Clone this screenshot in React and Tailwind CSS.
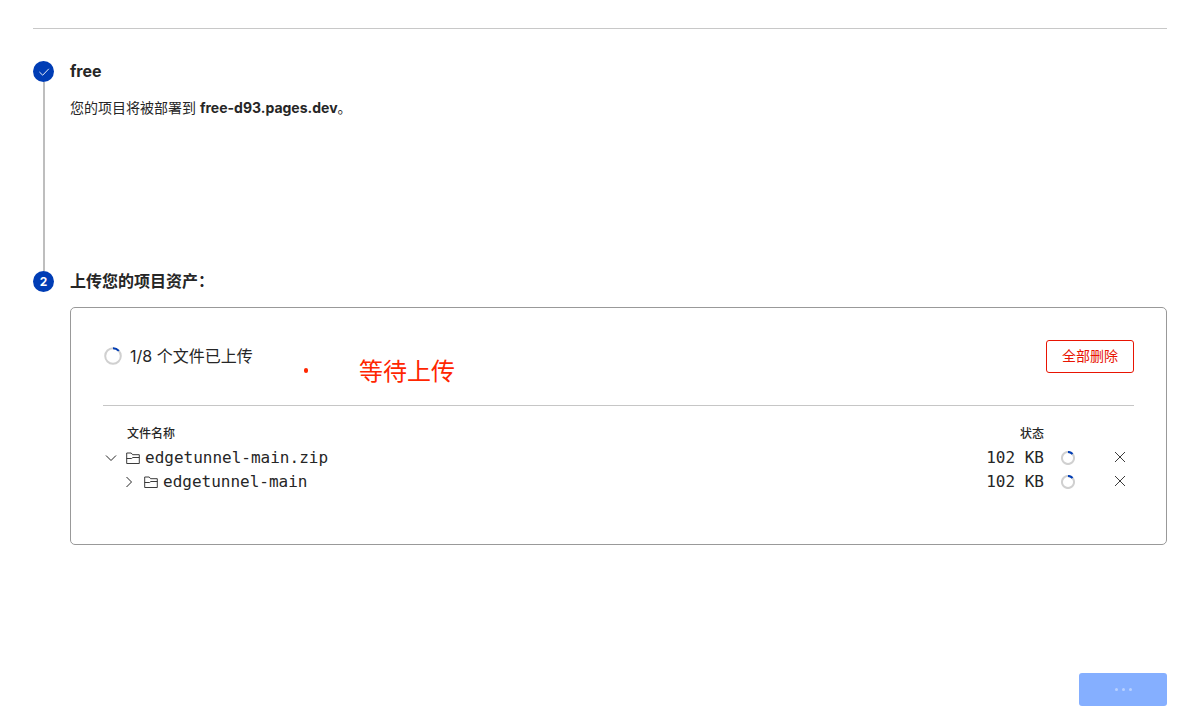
import React from "react";

const files = [
  { name: "edgetunnel-main.zip", size: "102 KB", open: true },
  { name: "edgetunnel-main", size: "102 KB", open: false },
];

const CheckIcon = () => (
  <svg viewBox="0 0 12 12" className="h-3 w-3" fill="none" stroke="currentColor" strokeWidth="0.9">
    <path d="M1.4 6L4.7 9.2L10.8 2.8" />
  </svg>
);

const Chevron = ({ open }) => (
  <svg viewBox="0 0 12 12" className="h-3 w-3" fill="none" stroke="currentColor" strokeWidth="1">
    {open ? <path d="M1 3.5L6 8.5L11 3.5" /> : <path d="M3.5 1L8.5 6L3.5 11" />}
  </svg>
);

const FolderIcon = () => (
  <svg viewBox="0 0 14 14" className="h-3.5 w-3.5" fill="none" stroke="currentColor" strokeWidth="0.9">
    <path d="M0.7 12.5V2H5.2L6.6 3.7H13.3V12.5ZM0.7 7.5H5.6L6.8 6.5H13.3" />
  </svg>
);

const CloseIcon = () => (
  <svg viewBox="0 0 12 12" className="h-3 w-3" fill="none" stroke="currentColor" strokeWidth="0.9">
    <path d="M1 1L11 11M11 1L1 11" />
  </svg>
);

const Spinner = ({ className }) => (
  <svg viewBox="0 0 18 18" className={className} fill="none">
    <circle cx="9" cy="9" r="7.8" stroke="#d0d0d0" />
    <path d="M9 1.2A7.8 7.8 0 0 1 14.8 3.8" stroke="#003db5" />
  </svg>
);

const Badge = ({ children }) => (
  <div className="flex h-[21px] w-[21px] shrink-0 items-center justify-center rounded-full bg-[#003db5] text-xs font-bold text-white">
    {children}
  </div>
);

const App = () => {
  return (
    <main className="bg-white px-[33px] pt-7 pb-2 font-['Inter','Noto_Sans_CJK_SC',sans-serif] text-sm text-[#262626]">
      <hr className="mb-8 border-[#c8c8c8]" />

      {/* Step 1: project name */}
      <section className="flex gap-4">
        <div className="flex flex-col items-center">
          <Badge>
            <CheckIcon />
          </Badge>
          <div className="w-0.5 grow bg-[#bebebe]" />
        </div>
        <div className="min-h-[210px]">
          <h2 className="text-base leading-[21px] font-bold">free</h2>
          <p className="mt-4 leading-5">
            您的项目将被部署到 <strong className="font-bold">free-d93.pages.dev</strong>。
          </p>
        </div>
      </section>

      {/* Step 2: assets */}
      <section className="flex gap-4">
        <Badge>2</Badge>
        <div className="min-w-0 grow">
          <h2 className="text-base leading-[21px] font-bold">上传您的项目资产：</h2>

          <div className="relative mt-[15px] rounded-[5px] border border-[#999999] px-8 pt-8 pb-[50px]">
            <div className="flex items-center justify-between border-b border-[#c6c6c6] pb-8">
              <div className="flex items-center gap-2 pb-0.5 pl-px text-base">
                <Spinner className="h-[18px] w-[18px] stroke-2" />
                <span>1/8 个文件已上传</span>
              </div>
              <button className="h-[33px] w-[88px] rounded-[3px] border border-[#e81403] pb-0.5 text-sm text-[#e81403]">
                全部删除
              </button>
            </div>

            <table className="mt-[15px] w-full">
              <thead>
                <tr className="h-[25px] text-xs">
                  <th className="p-0 pl-6 text-left font-medium">文件名称</th>
                  <th className="w-20 p-0 text-right font-medium">状态</th>
                  <td className="w-12 p-0" />
                  <td className="w-[42px] p-0" />
                </tr>
              </thead>
              <tbody className="font-['DejaVu_Sans_Mono',monospace] text-base">
                {files.map((file, i) => (
                  <tr key={file.name} className="h-6">
                    <td className="p-0">
                      <div className={i === 0 ? "flex items-center pl-0.5" : "flex items-center pl-5"}>
                        <button aria-label="展开" aria-expanded={file.open} className="mr-[9px]">
                          <Chevron open={file.open} />
                        </button>
                        <FolderIcon />
                        <span className="ml-[5px]">{file.name}</span>
                      </div>
                    </td>
                    <td className="p-0 text-right whitespace-nowrap">{file.size}</td>
                    <td className="p-0">
                      <Spinner className="mx-auto h-3.5 w-3.5 stroke-[2.6]" />
                    </td>
                    <td className="p-0 pb-0.5 pl-[14px]">
                      <button aria-label="删除" className="mx-auto block">
                        <CloseIcon />
                      </button>
                    </td>
                  </tr>
                ))}
              </tbody>
            </table>

            {/* Red marker note over the card */}
            <span className="absolute top-[60px] left-[233px] h-[5px] w-1 rounded-full bg-[#ff2600]" />
            <span className="absolute top-12 left-[288px] text-2xl text-[#ff2600]">等待上传</span>
          </div>
        </div>
      </section>

      <div className="mt-32 flex justify-end">
        <button
          aria-label="部署站点"
          className="flex h-[33px] w-[88px] items-center justify-center gap-1 rounded-[3px] bg-[#85afff]"
        >
          <span className="h-[3px] w-[3px] rounded-full bg-[#b8d0ff]" />
          <span className="h-[3px] w-[3px] rounded-full bg-[#b8d0ff]" />
          <span className="h-[3px] w-[3px] rounded-full bg-[#b8d0ff]" />
        </button>
      </div>
    </main>
  );
};

export default App;
